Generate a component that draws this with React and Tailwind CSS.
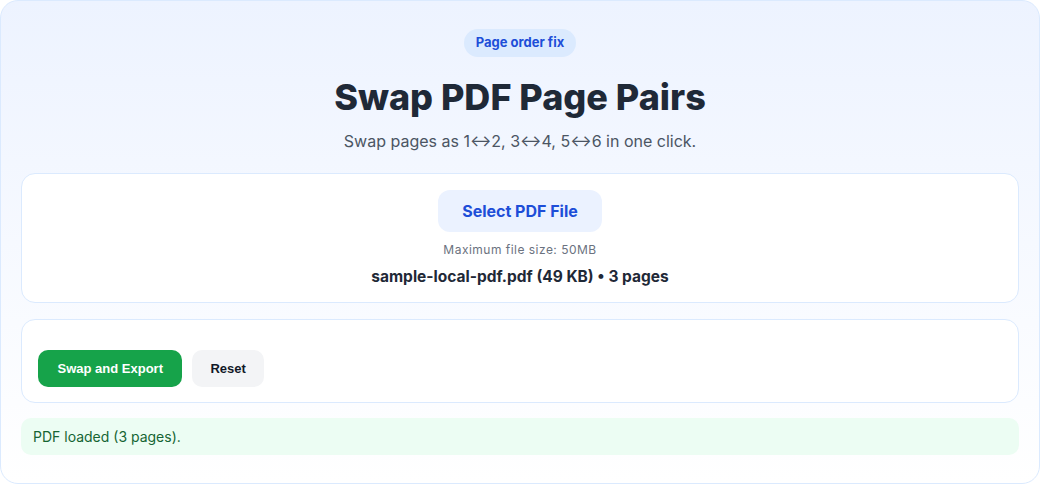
export default function App() {
  return (
    <div className="w-[1040px] h-[484px] font-['Inter',sans-serif]">
      <div className="h-full rounded-[18px] border border-[#dbeafe] bg-gradient-to-b from-[#edf3ff] to-white px-5 pt-7 pb-7 flex flex-col">
        {/* Header */}
        <div className="flex flex-col items-center">
          <span className="h-7 px-3 rounded-full bg-[#dbeafe] text-[#1d4ed8] text-[13px] font-bold flex items-center">
            Page order fix
          </span>
          <h1 className="mt-5 text-4xl leading-10 font-extrabold text-[#1f2937]">
            Swap PDF Page Pairs
          </h1>
          <p className="mt-3 text-base leading-6 text-[#4b5563]">
            Swap pages as 1↔2, 3↔4, 5↔6 in one click.
          </p>
        </div>

        {/* Upload */}
        <div className="mt-5 rounded-[14px] border border-[#dbeafe] bg-white px-4 pt-4 pb-[14px] flex flex-col items-center">
          <button className="h-[42px] px-6 rounded-xl bg-[#ebf2ff] text-[#1d4ed8] text-base font-bold">
            Select PDF File
          </button>
          <p className="mt-2.5 text-[12px] leading-4 tracking-[0.04em] text-[#6b7280]">Maximum file size: 50MB</p>
          <p className="mt-2 text-[15.5px] leading-[22px] font-bold text-[#1f2937]">
            sample-local-pdf.pdf (49 KB) • 3 pages
          </p>
        </div>

        {/* Actions */}
        <div className="mt-4 rounded-[14px] border border-[#dbeafe] bg-white px-4 pt-[30px] pb-[15px] flex gap-2.5">
          <button className="h-[37px] px-[19.5px] rounded-[10px] bg-[#16a34a] text-white text-[13px] font-bold font-['Liberation_Sans',Arial,sans-serif]">
            Swap and Export
          </button>
          <button className="h-[37px] px-[18px] rounded-[10px] bg-[#f3f4f6] text-[#111827] text-[13px] font-bold font-['Liberation_Sans',Arial,sans-serif]">
            Reset
          </button>
        </div>

        {/* Status */}
        <div className="mt-[15px] h-[37px] rounded-[10px] bg-[#ecfdf3] px-3 flex items-center text-sm text-[#166534]">
          PDF loaded (3 pages).
        </div>
      </div>
    </div>
  );
}
